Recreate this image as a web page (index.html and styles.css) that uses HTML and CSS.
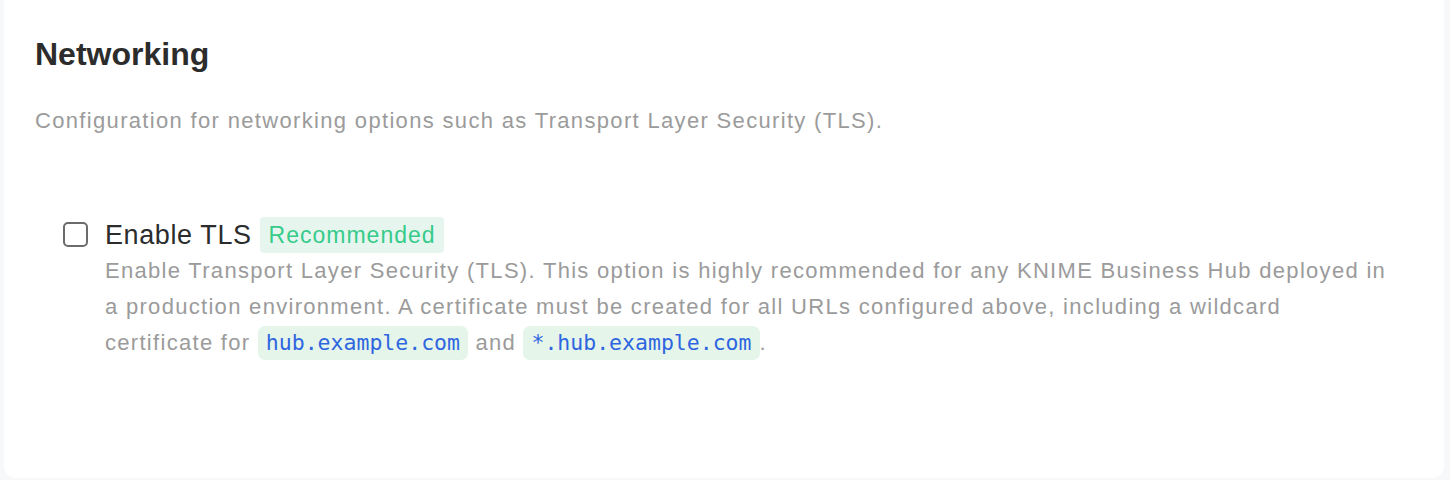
FILE: index.html
```html
<!DOCTYPE html>
<html>
<head>
<meta charset="utf-8">
<link rel="stylesheet" href="styles.css">
</head>
<body>
<div class="page">
  <section class="card">
    <h1 class="title">Networking</h1>
    <p class="intro">Configuration for networking options such as Transport Layer Security (TLS).</p>
    <div class="option">
      <span class="checkbox"></span>
      <div class="option-body">
        <div class="option-head">
          <span class="label">Enable TLS</span>
          <span class="badge">Recommended</span>
        </div>
        <p class="help">Enable Transport Layer Security (TLS). This option is highly recommended for any KNIME Business Hub deployed in a production environment. A certificate must be created for all URLs configured above, including a wildcard certificate for <code class="code">hub.example.com</code> and <code class="code">*.hub.example.com</code>.</p>
      </div>
    </div>
  </section>
</div>
</body>
</html>
```
FILE: styles.css
```css
* { box-sizing: border-box; }
html, body { margin: 0; padding: 0; }
body {
  background: #f7f8fa;
  font-family: "Liberation Sans", Arial, sans-serif;
  width: 1450px;
  height: 480px;
  overflow: hidden;
}
.page {
  padding: 0 6px 2px 4px;
  height: 480px;
}
.card {
  background: #ffffff;
  height: 478px;
  border-radius: 0 0 12px 12px;
  padding: 34px 31px 0 31px;
}
.title {
  margin: 0;
  font-size: 32px;
  line-height: 40px;
  font-weight: 700;
  color: #2c2c2c;
}
.intro {
  margin: 32px 0 0 0;
  font-size: 22px;
  line-height: 30px;
  letter-spacing: 1.33px;
  color: #9b9b9b;
}
.option {
  display: flex;
  align-items: flex-start;
  gap: 17px;
  margin: 81px 0 0 28px;
}
.checkbox {
  flex: none;
  width: 25px;
  height: 25px;
  margin-top: 5px;
  border: 2px solid #6b6b6b;
  border-radius: 5px;
}
.option-body {
  flex: none;
  width: 1290px;
}
.option-head {
  display: flex;
  align-items: center;
  gap: 8px;
}
.label {
  font-size: 27px;
  line-height: 36px;
  letter-spacing: 0.6px;
  color: #2c2c2c;
}
.badge {
  font-size: 23px;
  line-height: 36px;
  letter-spacing: 1px;
  padding: 0 8px 0 9px;
  background: #e6f6ef;
  color: #36cb8a;
  border-radius: 4px;
}
.help {
  margin: 0;
  font-size: 22px;
  line-height: 36px;
  letter-spacing: 1.3px;
  color: #9b9b9b;
}
.code {
  display: inline-block;
  font-family: "DejaVu Sans Mono", monospace;
  font-size: 21.5px;
  line-height: 26px;
  letter-spacing: 0;
  color: #2e66e0;
  background: #e6f5ea;
  border-radius: 7px;
  padding: 4px 8px;
}
```
